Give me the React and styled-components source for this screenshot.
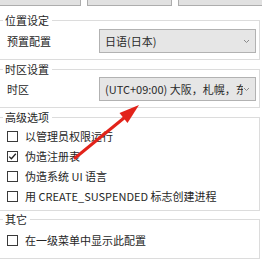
import React from 'react';
import styled, { createGlobalStyle } from 'styled-components';

const Global = createGlobalStyle`
  html, body {
    margin: 0;
    padding: 0;
    background: #fff;
    overflow: hidden;
  }
  body {
    font-family: "Noto Sans CJK SC", "Noto Sans", sans-serif;
    font-size: 11px;
    color: #262626;
  }
`;

const Page = styled.div`
  position: relative;
  width: 262px;
  height: 268px;
  overflow: hidden;
`;

const ButtonRow = styled.div`
  display: flex;
  gap: 6px;
  margin-left: -4px;
  margin-top: -14px;
`;

const TopButton = styled.div`
  flex: 0 0 85px;
  height: 20px;
  box-sizing: border-box;
  border: 1px solid #adadad;
  background: #e1e1e1;
`;

const Group = styled.fieldset`
  margin: ${(p) => p.$top}px 2px 0 -3px;
  padding: ${(p) => p.$padTop}px 3px ${(p) => p.$padBottom}px 8px;
  border: 1px solid #dcdcdc;
  min-width: 0;
`;

const Legend = styled.legend`
  margin-left: -3px;
  padding: 0 3px 0 2px;
  font-size: 11px;
  line-height: 14px;
  color: #1e1e1e;
`;

const FieldRow = styled.div`
  display: flex;
  align-items: center;
`;

const FieldLabel = styled.span`
  flex: 0 0 92px;
  margin-left: 1px;
  line-height: 14px;
`;

const Combo = styled.div`
  flex: 1;
  display: flex;
  align-items: center;
  height: 24px;
  box-sizing: border-box;
  border: 1px solid #b2b2b2;
  background: #e6e6e6;
  padding: 0 5px 0 5px;
  min-width: 0;
`;

const ComboText = styled.span`
  flex: 1;
  white-space: nowrap;
  overflow: hidden;
  color: #2a2a2a;
`;

const CheckRow = styled.label`
  display: flex;
  align-items: center;
  height: 20px;
  margin-left: 1px;
`;

const Box = styled.span`
  flex: 0 0 11px;
  height: 11px;
  box-sizing: border-box;
  border: 1px solid #3a3a3a;
  background: #fff;
  margin-right: 7px;
  display: flex;
  align-items: center;
  justify-content: center;
`;

const Overlay = styled.svg`
  position: absolute;
  left: 0;
  top: 0;
  pointer-events: none;
`;

function Chevron() {
  return (
    <svg width="7" height="5" viewBox="0 0 7 5">
      <polyline points="1,1 3.5,3.5 6,1" fill="none" stroke="#8a8a8a" strokeWidth="1" />
    </svg>
  );
}

function Check({ label, checked }) {
  return (
    <CheckRow>
      <Box>
        {checked && (
          <svg width="9" height="9" viewBox="0 0 9 9">
            <polyline points="1.2,4.6 3.4,6.8 7.8,1.8" fill="none" stroke="#222" strokeWidth="1.3" />
          </svg>
        )}
      </Box>
      <span>{label}</span>
    </CheckRow>
  );
}

export default function App() {
  return (
    <Page>
      <Global />
      <ButtonRow>
        <TopButton />
        <TopButton />
        <TopButton />
      </ButtonRow>

      <Group $top={7} $padTop={2} $padBottom={6}>
        <Legend>位置设定</Legend>
        <FieldRow>
          <FieldLabel>预置配置</FieldLabel>
          <Combo>
            <ComboText>日语(日本)</ComboText>
            <Chevron />
          </Combo>
        </FieldRow>
      </Group>

      <Group $top={2} $padTop={1} $padBottom={6}>
        <Legend>时区设置</Legend>
        <FieldRow>
          <FieldLabel>时区</FieldLabel>
          <Combo>
            <ComboText>(UTC+09:00) 大阪，札幌，东京</ComboText>
            <Chevron />
          </Combo>
        </FieldRow>
      </Group>

      <Group $top={2} $padTop={2} $padBottom={4}>
        <Legend>高级选项</Legend>
        <Check label="以管理员权限运行" />
        <Check label="伪造注册表" checked />
        <Check label="伪造系统 UI 语言" />
        <Check label="用 CREATE_SUSPENDED 标志创建进程" />
      </Group>

      <Group $top={1} $padTop={4} $padBottom={8}>
        <Legend>其它</Legend>
        <Check label="在一级菜单中显示此配置" />
      </Group>

      <Overlay width="262" height="268" viewBox="0 0 262 268">
        <line x1="75" y1="158" x2="124" y2="118" stroke="#e2231a" strokeWidth="3" strokeLinecap="round" />
        <polygon points="139,105 127.5,123 119.5,113" fill="#e2231a" />
      </Overlay>
    </Page>
  );
}
